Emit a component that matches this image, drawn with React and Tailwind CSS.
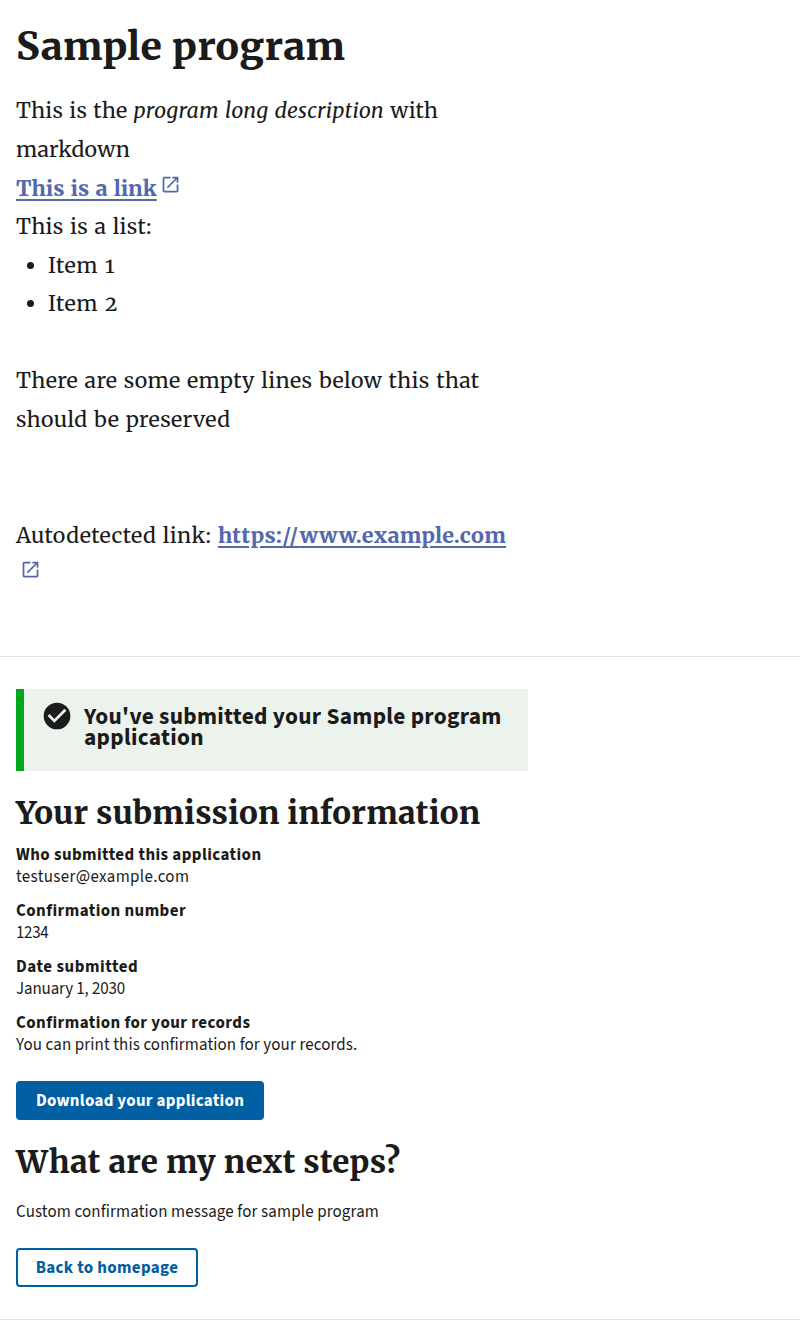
import React from "react";

function ExternalIcon() {
  return (
    <svg viewBox="0 0 24 24" className="relative -top-px ml-[3.5px] inline-block h-[21px] w-[21px] align-baseline" fill="currentColor">
      <path d="M19 19H5V5h7V3H5a2 2 0 0 0-2 2v14a2 2 0 0 0 2 2h14c1.1 0 2-.9 2-2v-7h-2v7zM14 3v2h3.59l-9.83 9.83 1.41 1.41L19 6.41V10h2V3h-7z" />
    </svg>
  );
}

function Detail({ label, value, labelSpacing = "tracking-[0.43px]", valueSpacing = "tracking-[0.11px]" }) {
  return (
    <div className="h-14">
      <dt className={`h-[22px] font-bold ${labelSpacing}`}>{label}</dt>
      <dd className={valueSpacing}>{value}</dd>
    </div>
  );
}

export default function App() {
  return (
    <div className="h-[1320px] overflow-hidden bg-white font-['Source_Sans_Pro','Source_Sans_3','Noto_Sans_CJK_JP',sans-serif] text-[16.96px] leading-[22px] text-[#1b1b1b]">
      <section className="flex h-[657px] flex-col border-b border-[#dfe1e2] px-4 pt-[23px] font-['Merriweather','Noto_Serif','DejaVu_Serif',serif]">
        <h1 className="h-[69.2px] text-[39.04px] leading-[47px] font-extrabold tracking-[0.42px]">Sample program</h1>
        <div className="w-[512px] text-[21.4px] leading-[38.6px] tracking-[0.34px] [word-spacing:1.1px] oldstyle-nums">
          <p className="tracking-[0.14px]">This is the <em className="tracking-[0.2px]">program long description</em> with markdown</p>
          <p className="h-[38.6px] pt-[0.6px]"><a className="font-extrabold text-[#5369ac]"><span className="underline decoration-2 underline-offset-[3px] tracking-normal">This is a link</span><ExternalIcon /></a></p>
          <p className="tracking-[0.28px]">This is a list:</p>
          <ul className="list-disc pl-8 tracking-[0.65px]">
            <li>Item 1</li>
            <li>Item 2</li>
          </ul>
          <p className="mt-[38.6px] tracking-[0.33px]">There are some empty lines below this that should be preserved</p>
          <p className="mt-[77.2px] tracking-[0.38px]">Autodetected link: <a className="font-extrabold text-[#5369ac]"><span className="tracking-[0.27px] underline decoration-2 underline-offset-[3px]">https:<span className="tracking-[1.3px]">//</span>www.example.com</span><br /><ExternalIcon /></a></p>
        </div>
      </section>
      <section className="flex h-[663px] flex-col items-start border-b border-[#dfe1e2] px-4 pt-8">
        <div className="flex h-[82px] w-[512px] border-l-8 border-[#00a91c] bg-[#ecf3ec] pt-[11px] pl-[17px]">
          <svg viewBox="0 0 24 24" className="h-8 w-8 shrink-0">
            <path fill="#1b1b1b" d="M12 2a10 10 0 1 0 0 20 10 10 0 0 0 0-20zm-2 15l-5-5 1.41-1.41L10 14.17l7.59-7.59L19 8l-9 9z" />
          </svg>
          <h2 className="pt-[6px] pl-[11px] text-[23.36px] leading-[21px] font-bold tracking-[0.3px]">You've submitted your Sample program application</h2>
        </div>
        <h2 className="mt-[23px] h-[50px] font-['Merriweather','Noto_Serif','DejaVu_Serif',serif] text-[31.2px] leading-[38px] font-extrabold tracking-[0.3px]">Your submission information</h2>
        <dl className="h-56">
          <Detail label="Who submitted this application" value="testuser@example.com" valueSpacing="tracking-[0.35px]" />
          <Detail label="Confirmation number" value="1234" valueSpacing="tracking-[-0.35px]" />
          <Detail label="Date submitted" value="January 1, 2030" labelSpacing="tracking-[0.55px]" valueSpacing="tracking-[-0.12px]" />
          <Detail label="Confirmation for your records" value="You can print this confirmation for your records." />
        </dl>
        <button className="mt-[13px] flex h-[39px] w-[248px] items-center justify-center rounded bg-[#005ea2] font-bold tracking-[0.28px] text-white">Download your application</button>
        <h2 className="mt-[23px] h-[58px] font-['Merriweather','Noto_Serif','DejaVu_Serif',serif] text-[31.2px] leading-[38px] font-extrabold tracking-[0.3px]">What are my next steps?</h2>
        <p className="tracking-[0.13px]">Custom confirmation message for sample program</p>
        <button className="mt-[25px] flex h-[39px] w-[182px] items-center justify-center rounded border-2 border-[#005ea2] font-bold tracking-[0.35px] text-[#005ea2]">Back to homepage</button>
      </section>
    </div>
  );
}
